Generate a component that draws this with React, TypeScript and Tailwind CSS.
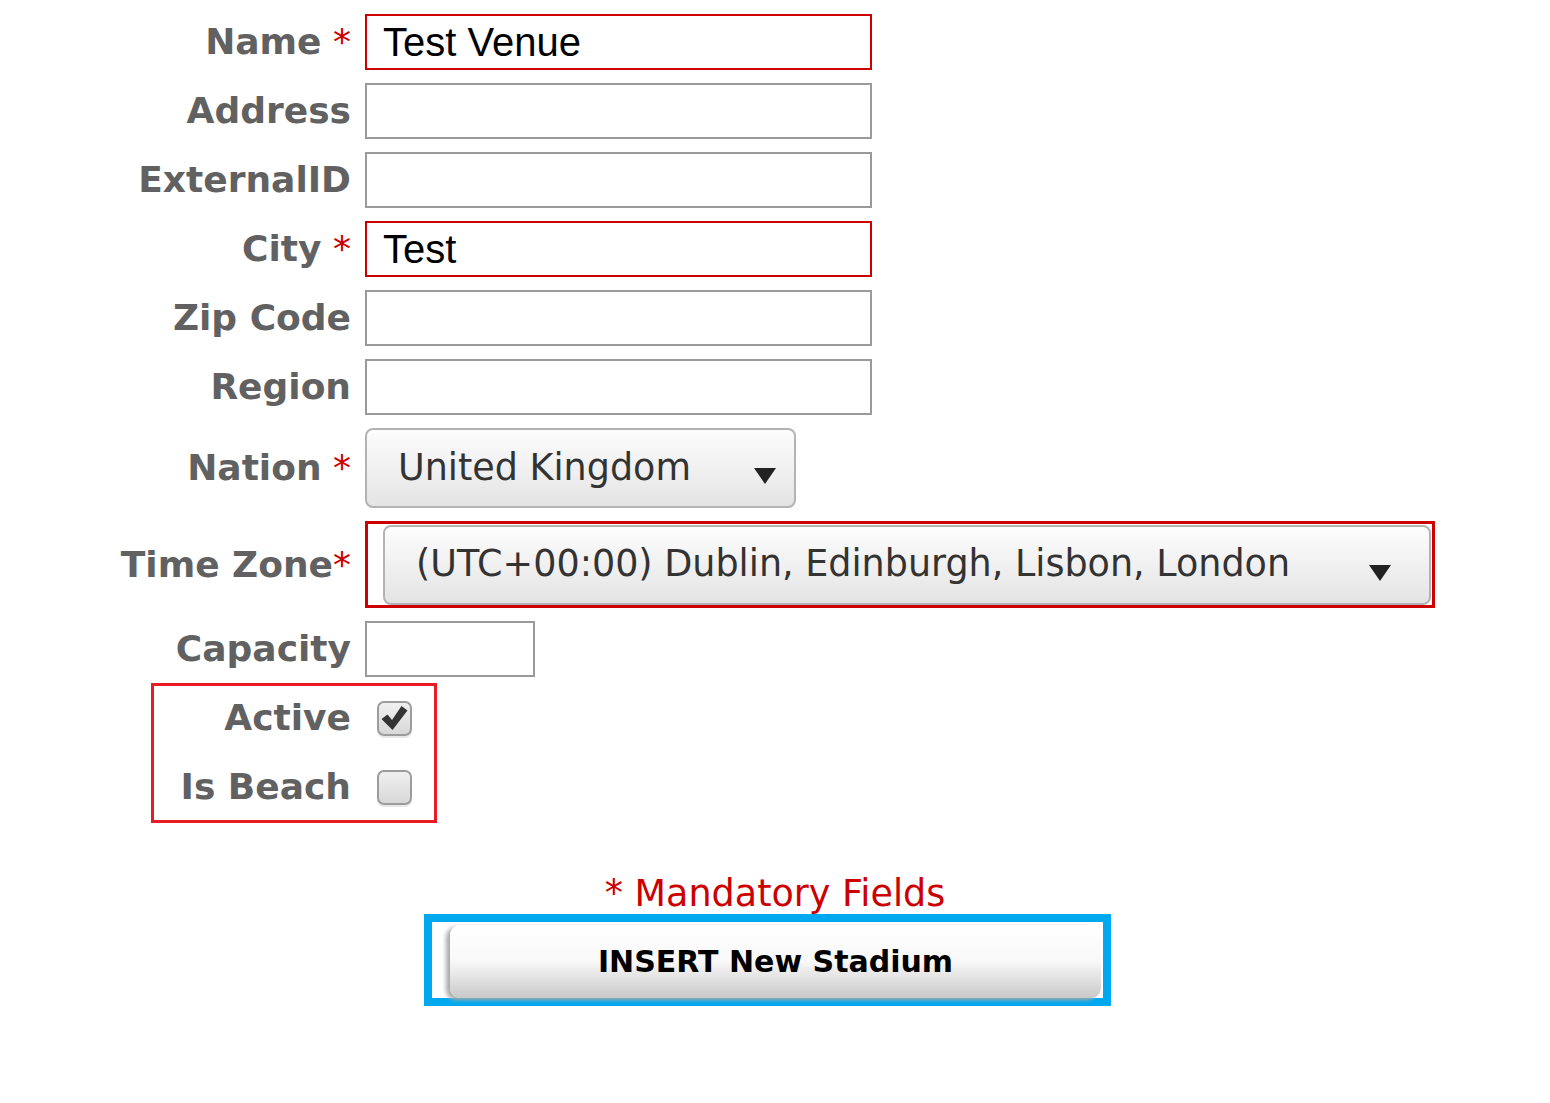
import React from 'react';

const labelFont = { fontFamily: '"DejaVu Sans", Verdana, sans-serif' };

function Arrow() {
  return (
    <svg width="22" height="16" viewBox="0 0 22 16" className="shrink-0">
      <polygon points="0,0 22,0 11,16" fill="#222" />
    </svg>
  );
}

function Label({ text, star, tight }: { text: string; star?: boolean; tight?: boolean }) {
  return (
    <div className="w-[351px] shrink-0 text-right text-[36px] font-bold text-[#616161] leading-none whitespace-nowrap" style={labelFont}>
      {text}
      {star && <span className="font-normal text-[#cc0000]">{tight ? '*' : ' *'}</span>}
    </div>
  );
}

function TextRow({ label, star, value, invalid, narrow }: { label: string; star?: boolean; value?: string; invalid?: boolean; narrow?: boolean }) {
  return (
    <div className="flex items-center">
      <Label text={label} star={star} />
      <div
        className={`ml-[14px] h-[56px] ${narrow ? 'w-[170px]' : 'w-[507px]'} border-[2px] ${invalid ? 'border-[#cc0000]' : 'border-[#9a9a9a]'} bg-white flex items-center pl-[16px] text-[40px] text-black`}
        style={{ fontFamily: '"Liberation Sans", Arial, sans-serif' }}
      >
        {value}
      </div>
    </div>
  );
}

function Select({ value, width, pr }: { value: string; width: string; pr: string }) {
  return (
    <div
      className={`${width} ${pr} h-[80px] rounded-[8px] border-[2px] border-[#b3b3b3] bg-gradient-to-b from-[#fdfdfd] to-[#e4e4e4] flex items-center pl-[31px] text-[36.5px] text-[#333]`}
      style={labelFont}
    >
      <span className="flex-1 whitespace-nowrap">{value}</span>
      <div className="mt-[16px]">
        <Arrow />
      </div>
    </div>
  );
}

function Check({ checked }: { checked?: boolean }) {
  return (
    <div className="ml-[26px] w-[35px] h-[35px] rounded-[7px] border-[2px] border-[#9c9c9c] bg-gradient-to-b from-[#f0f0f0] to-[#d8d8d8] flex items-center justify-center shadow-[0_2px_1px_#e8e8e8]">
      {checked && (
        <svg width="27" height="26" viewBox="0 0 27 26">
          <path d="M0.5 14 L6.5 9.5 L11 15 L20.5 1 L26.5 5.5 L11.5 25 Z" fill="#333" />
        </svg>
      )}
    </div>
  );
}

export default function App() {
  return (
    <div className="w-[1550px] h-[1103px] bg-white pt-[14px]">
      <div className="flex flex-col gap-[13px]">
        <TextRow label="Name" star value="Test Venue" invalid />
        <TextRow label="Address" />
        <TextRow label="ExternalID" />
        <TextRow label="City" star value="Test" invalid />
        <TextRow label="Zip Code" />
        <TextRow label="Region" />
        <div className="flex items-center">
          <Label text="Nation" star />
          <div className="ml-[14px]">
            <Select value="United Kingdom" width="w-[431px]" pr="pr-[18px]" />
          </div>
        </div>
        <div className="flex items-center">
          <Label text="Time Zone" star tight />
          <div className="ml-[14px] w-[1070px] h-[87px] border-[3px] border-[#cc0000] flex items-center pl-[15px]">
            <Select value="(UTC+00:00) Dublin, Edinburgh, Lisbon, London" width="w-[1048px]" pr="pr-[38px]" />
          </div>
        </div>
        <TextRow label="Capacity" narrow />
      </div>

      <div className="ml-[151px] mt-[6px] w-[286px] h-[140px] border-[3px] border-[#e81c24] flex flex-col gap-[5px]">
        <div className="h-[64px] flex items-center">
          <div className="w-[197px] text-right text-[36px] font-bold text-[#616161] leading-none" style={labelFont}>Active</div>
          <Check checked />
        </div>
        <div className="h-[64px] flex items-center">
          <div className="w-[197px] text-right text-[36px] font-bold text-[#616161] leading-none" style={labelFont}>Is Beach</div>
          <Check />
        </div>
      </div>

      <div className="mt-[51px] text-center text-[36.5px] leading-[40px] text-[#cc0000]" style={labelFont}>
        * Mandatory Fields
      </div>

      <div className="ml-[424px] w-[687px] h-[92px] border-[8px] border-[#00a8ef] bg-white pl-[18px] pr-[2px] pt-[3px]">
        <div
          className="h-[73px] rounded-[10px] bg-gradient-to-b from-white via-[#f8f8f8] to-[#c9c9c9] shadow-[-4px_2px_4px_#aaa] flex items-center justify-center text-[30px] font-bold text-black"
          style={labelFont}
        >
          INSERT New Stadium
        </div>
      </div>
    </div>
  );
}
